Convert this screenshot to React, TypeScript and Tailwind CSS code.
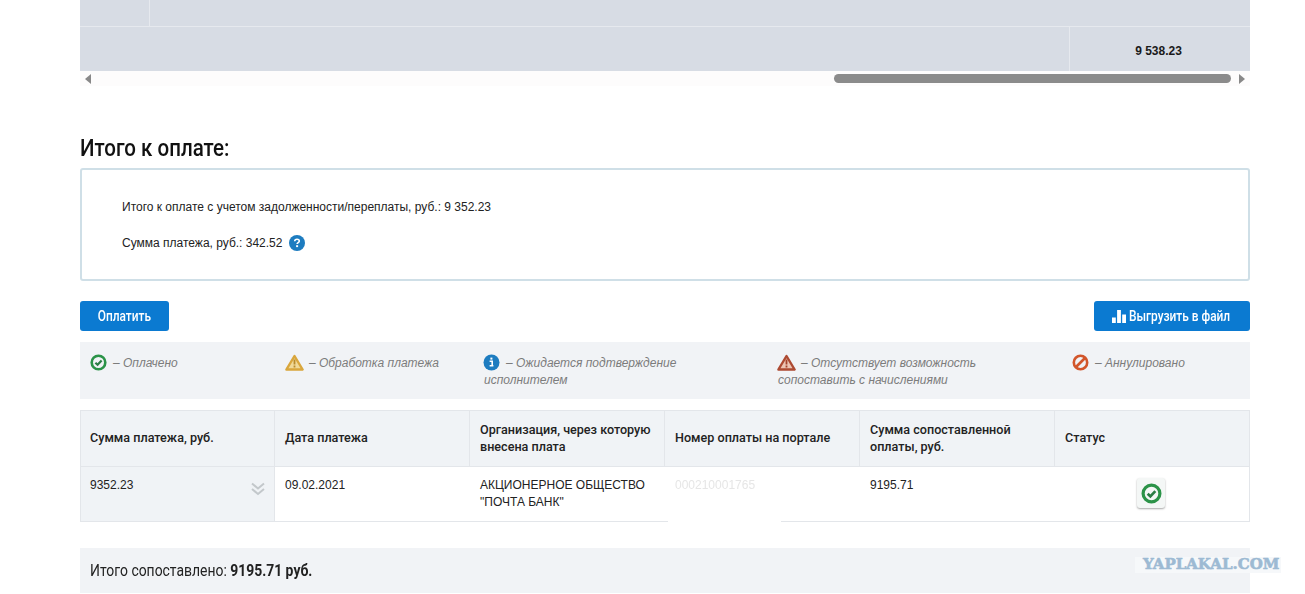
import React from "react";

const Check = ({ s = 17 }: { s?: number }) => (
  <svg width={s} height={s} viewBox="0 0 17 17" className="shrink-0">
    <circle cx="8.5" cy="8.5" r="6.8" fill="none" stroke="#2b9348" strokeWidth="2.6" />
    <path d="M5.4 8.7 7.6 10.8 11.6 6.6" fill="none" stroke="#2b7d45" strokeWidth="2.2" />
  </svg>
);
const Tri = ({ c, d, m }: { c: string; d: string; m: string }) => (
  <svg width="19" height="17" viewBox="0 0 19 17" className="shrink-0">
    <path d="M9.5 2 17.6 15.5H1.4Z" fill={d} stroke={c} strokeWidth="2.4" strokeLinejoin="round" />
    <path d="M9.5 5.6v5M9.5 11.6v2" stroke={m} strokeWidth="1.8" />
  </svg>
);
const Info = () => (
  <svg width="17" height="17" viewBox="0 0 17 17" className="shrink-0">
    <circle cx="8.5" cy="8.5" r="8" fill="#1d7cc0" />
    <path d="M6.6 7.2h2.6v4.6h1.2M6.6 11.8h3.8" fill="none" stroke="#fff" strokeWidth="1.6" />
    <rect x="7.4" y="3.6" width="2" height="2" fill="#fff" />
  </svg>
);
const Ban = () => (
  <svg width="17" height="17" viewBox="0 0 17 17" className="shrink-0">
    <circle cx="8.5" cy="8.5" r="6.7" fill="none" stroke="#d2562b" strokeWidth="2.6" />
    <path d="M4 13 13 4" stroke="#d2562b" strokeWidth="2.6" />
  </svg>
);
const Help = () => (
  <svg width="16" height="16" viewBox="0 0 16 16" className="shrink-0">
    <circle cx="8" cy="8" r="8" fill="#1d7cc0" />
    <path d="M5.7 6.2C5.8 4.8 6.8 4.2 8 4.2c1.3 0 2.3.7 2.3 1.9 0 1.5-2.2 1.6-2.2 3" fill="none" stroke="#fff" strokeWidth="1.6" />
    <rect x="7.1" y="10.2" width="2" height="1.9" fill="#fff" />
  </svg>
);
const Bars = () => (
  <svg width="14" height="13" viewBox="0 0 14 13" className="shrink-0">
    <path d="M0 7.5h3.8V13H0ZM5.1 0h3.8v13H5.1ZM10.2 4.5H14V13h-3.8Z" fill="#fff" />
  </svg>
);
const Chevrons = () => (
  <svg width="14" height="14" viewBox="0 0 14 14" className="shrink-0">
    <path d="M1 1.5 7 6.5 13 1.5M1 7 7 12 13 7" fill="none" stroke="#c3c8cb" strokeWidth="2" />
  </svg>
);

const cond = "font-['Roboto',sans-serif]";
const arial = "font-['Liberation_Sans',sans-serif]";

const legend = [
  { w: "w-[195px]", icon: <Check />, text: "– Оплачено", gap: "gap-[6px]" },
  { w: "w-[198px]", icon: <Tri c="#d9a63c" d="#f0d998" m="#b98b2c" />, text: "– Обработка платежа", gap: "gap-[5px]" },
  { w: "w-[294px]", icon: <Info />, text: "– Ожидается подтверждение", second: "исполнителем", gap: "gap-[6px]" },
  { w: "w-[295px]", icon: <Tri c="#ad4a32" d="#ecc4b4" m="#a3422c" />, text: "– Отсутствует возможность", second: "сопоставить с начислениями", gap: "gap-[5px]" },
  { w: "w-[170px]", icon: <Ban />, text: "– Аннулировано", gap: "gap-[6px]" },
];

const head = ["Сумма платежа, руб.", "Дата платежа", "Организация, через которую внесена плата", "Номер оплаты на портале", "Сумма сопоставленной оплаты, руб.", "Статус"];

export default function App() {
  return (
    <div className={`relative h-[594px] overflow-hidden bg-white pl-[80px] ${arial}`}>
      <div className="w-[1170px]">
        {/* top table remnant */}
        <div className="bg-[#d7dce4]">
          <div className="flex h-[27px] border-b border-[#e6e9ee]">
            <div className="w-[70px] border-r border-[#e6e9ee]" />
          </div>
          <div className="flex h-[44px]">
            <div className="flex-1" />
            <div className="w-[181px] border-l border-[#e6e9ee] flex items-center justify-center pt-[4px] pr-[3px] text-[12px] font-bold text-[#1a1a1a]">
              9 538.23
            </div>
          </div>
        </div>
        {/* scrollbar */}
        <div className="flex items-center h-[15px] bg-[#fdfcfc] px-[5px]">
          <span className="block w-0 h-0 border-y-[5px] border-y-transparent border-r-[6px] border-r-[#888]" />
          <div className="w-[397px] h-[9px] rounded-full bg-[#8b8b8b] ml-[743px]" />
          <span className="block ml-[8px] w-0 h-0 border-y-[5px] border-y-transparent border-l-[6px] border-l-[#888]" />
        </div>

        <h2 className={`mt-[44px] h-[38px] text-[24px] leading-[36px] font-medium text-[#111] origin-left scale-x-[0.855] whitespace-nowrap ${cond}`}>Итого к оплате:</h2>

        <div className="h-[113px] rounded-[3px] border-2 border-[#cfdfe7] pl-[40px] pt-[29px] text-[12px] text-[#222]">
          <div className="leading-[16px]">Итого к оплате с учетом задолженности/переплаты, руб.: 9 352.23</div>
          <div className="mt-[20px] flex items-center gap-[7px] leading-[16px]">
            <span>Сумма платежа, руб.: 342.52</span>
            <Help />
          </div>
        </div>

        <div className="mt-[20px] flex justify-between">
          <button className="h-[30px] w-[89px] rounded-[3px] bg-[#0b7ad1] text-white text-[14px] font-medium font-['Roboto',sans-serif]">
            <span className="inline-block scale-x-[0.85]">Оплатить</span>
          </button>
          <button className="h-[30px] w-[156px] rounded-[3px] bg-[#0b7ad1] text-white text-[14px] font-medium font-['Roboto',sans-serif] flex items-center justify-center gap-[2px]">
            <Bars />
            <span className="inline-block scale-x-[0.85] whitespace-nowrap -mx-[8px]">Выгрузить в файл</span>
          </button>
        </div>

        {/* legend */}
        <div className="mt-[11px] h-[57px] bg-[#f1f3f6] flex pl-[10px] pt-[12px] text-[12px] italic text-[#7c7c7c]">
          {legend.map((l) => (
            <div key={l.text} className={`${l.w} shrink-0`}>
              <div className={`flex items-center h-[17px] ${l.gap}`}>
                {l.icon}
                <span className="whitespace-nowrap">{l.text}</span>
              </div>
              {l.second && <div className="mt-[1px] ml-[1px] leading-[17px] whitespace-nowrap">{l.second}</div>}
            </div>
          ))}
        </div>

        {/* payments table */}
        <div className="mt-[11px] border border-[#e3e6ea] relative">
          <div className="grid grid-cols-[193px_195px_195px_195px_195px_195px] bg-[#f0f3f6] border-b border-[#e3e6ea] h-[56px]">
            {head.map((h, i) => (
              <div key={h} className={`${i ? "border-l border-[#e3e6ea] pl-[10px]" : "pl-[9px]"} flex items-center pr-[10px] pb-[2px] text-[12.6px] leading-[17px] font-medium text-[#222] font-['Roboto',sans-serif]`}>
                {h}
              </div>
            ))}
          </div>
          <div className="grid grid-cols-[193px_195px_195px_195px_195px_195px] h-[54px] text-[12px] leading-[17px] text-[#222]">
            <div className="bg-[#f0f3f6] pl-[9px] pr-[9px] pt-[10px] flex justify-between">
              <span>9352.23</span>
              <span className="mt-[5px]"><Chevrons /></span>
            </div>
            <div className="border-l border-[#e3e6ea] pl-[10px] pt-[10px]">09.02.2021</div>
            <div className="pl-[10px] pr-[4px] pt-[10px] border-l border-white">АКЦИОНЕРНОЕ ОБЩЕСТВО "ПОЧТА БАНК"</div>
            <div className="pl-[11px] pt-[10px] text-[#e6e6e6] blur-[0.6px]">000210001765</div>
            <div className="pl-[11px] pt-[10px]">9195.71</div>
            <div className="flex justify-center pt-[11px] pr-[1px]">
              <div className="w-[28px] h-[30px] rounded-[3px] bg-[#f4f7f6] shadow-[0_1px_2px_rgba(0,0,0,0.35)] flex items-center justify-center">
                <Check s={21} />
              </div>
            </div>
          </div>
          <div className="absolute left-[587px] bottom-[-4px] w-[113px] h-[6px] bg-white" />
        </div>

        {/* total */}
        <div className={`mt-[26px] h-[45px] bg-[#f1f3f6] flex items-center pl-[10px] pt-[1px] text-[16px] text-[#222] ${cond}`}>
          <span className="inline-block origin-left scale-x-[0.87] whitespace-nowrap">
            Итого сопоставлено: <b className="font-bold">9195.71 руб.</b>
          </span>
        </div>
      </div>

      {/* watermark */}
      <div className="absolute left-[1135px] top-[557px] h-[16px] w-[146px] pl-[8px] bg-[#f6f8fa] text-[15px] leading-[15px] font-bold text-[#9dbad3] [-webkit-text-stroke:0.6px_#9dbad3] font-['DejaVu_Serif',serif] whitespace-nowrap">
        YAPLAKAL.COM
      </div>
    </div>
  );
}
